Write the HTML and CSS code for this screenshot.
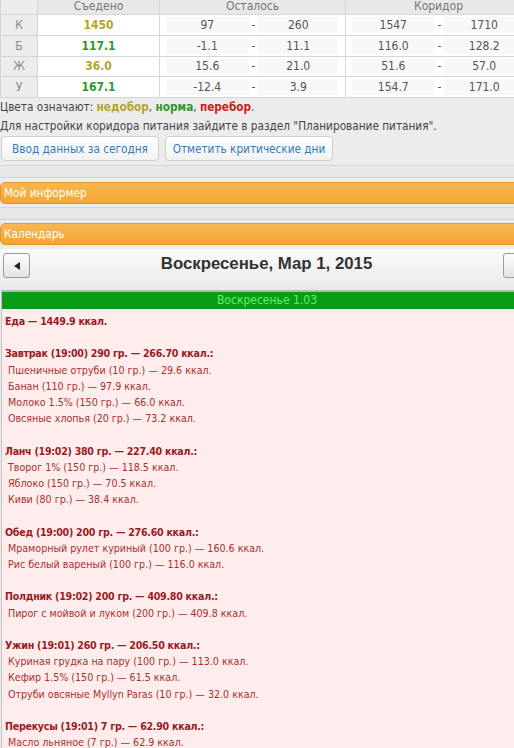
FILE: index.html
```html
<!DOCTYPE html>
<html lang="ru">
<head>
<meta charset="utf-8">
<title>Дневник питания</title>
<link rel="stylesheet" href="styles.css">
</head>
<body>
<div class="page">
  <div class="stats">
    <div class="row head">
      <div class="c lbl"></div><div class="c">Съедено</div><div class="c">Осталось</div><div class="c">Коридор</div>
    </div>
    <div class="row">
      <div class="c lbl">К</div><div class="c eaten under">1450</div>
      <div class="c range"><span class="v">97</span><span class="dash">-</span><span class="v">260</span></div>
      <div class="c range"><span class="v">1547</span><span class="dash">-</span><span class="v">1710</span></div>
    </div>
    <div class="row">
      <div class="c lbl">Б</div><div class="c eaten ok">117.1</div>
      <div class="c range"><span class="v">-1.1</span><span class="dash">-</span><span class="v">11.1</span></div>
      <div class="c range"><span class="v">116.0</span><span class="dash">-</span><span class="v">128.2</span></div>
    </div>
    <div class="row">
      <div class="c lbl">Ж</div><div class="c eaten under">36.0</div>
      <div class="c range"><span class="v">15.6</span><span class="dash">-</span><span class="v">21.0</span></div>
      <div class="c range"><span class="v">51.6</span><span class="dash">-</span><span class="v">57.0</span></div>
    </div>
    <div class="row">
      <div class="c lbl">У</div><div class="c eaten ok">167.1</div>
      <div class="c range"><span class="v">-12.4</span><span class="dash">-</span><span class="v">3.9</span></div>
      <div class="c range"><span class="v">154.7</span><span class="dash">-</span><span class="v">171.0</span></div>
    </div>
  </div>

  <p class="note">Цвета означают: <b class="under">недобор</b>, <b class="ok">норма</b>, <b class="over">перебор</b>.</p>
  <p class="note">Для настройки коридора питания зайдите в раздел "Планирование питания".</p>

  <div class="actions">
    <button class="btn btn-today">Ввод данных за сегодня</button>
    <button class="btn btn-crit">Отметить критические дни</button>
  </div>

  <div class="panel-body"></div>
  <div class="bar">Мой информер</div>
  <div class="panel-body"></div>
  <div class="bar bar-last">Календарь</div>

  <div class="cal-head">
    <button class="nav" aria-label="Назад"><svg width="6" height="8" viewBox="0 0 6 8"><polygon points="6,0 6,8 0,4" fill="#222"/></svg></button>
    <h2 class="cal-title">Воскресенье, Мар 1, 2015</h2>
    <button class="nav" aria-label="Вперёд"><svg width="6" height="8" viewBox="0 0 6 8"><polygon points="0,0 0,8 6,4" fill="#c98b3f"/></svg></button>
  </div>

  <div class="day">
    <div class="day-title">Воскресенье 1.03</div>
    <div class="day-body">
      <p class="total">Еда — 1449.9 ккал.</p>
      <div class="meal">
        <p class="meal-h">Завтрак (19:00) 290 гр. — 266.70 ккал.:</p>
        <p class="item">Пшеничные отруби (10 гр.) — 29.6 ккал.</p>
        <p class="item">Банан (110 гр.) — 97.9 ккал.</p>
        <p class="item">Молоко 1.5% (150 гр.) — 66.0 ккал.</p>
        <p class="item">Овсяные хлопья (20 гр.) — 73.2 ккал.</p>
      </div>
      <div class="meal">
        <p class="meal-h">Ланч (19:02) 380 гр. — 227.40 ккал.:</p>
        <p class="item">Творог 1% (150 гр.) — 118.5 ккал.</p>
        <p class="item">Яблоко (150 гр.) — 70.5 ккал.</p>
        <p class="item">Киви (80 гр.) — 38.4 ккал.</p>
      </div>
      <div class="meal">
        <p class="meal-h">Обед (19:00) 200 гр. — 276.60 ккал.:</p>
        <p class="item">Мраморный рулет куриный (100 гр.) — 160.6 ккал.</p>
        <p class="item">Рис белый вареный (100 гр.) — 116.0 ккал.</p>
      </div>
      <div class="meal">
        <p class="meal-h">Полдник (19:02) 200 гр. — 409.80 ккал.:</p>
        <p class="item">Пирог с мойвой и луком (200 гр.) — 409.8 ккал.</p>
      </div>
      <div class="meal">
        <p class="meal-h">Ужин (19:01) 260 гр. — 206.50 ккал.:</p>
        <p class="item">Куриная грудка на пару (100 гр.) — 113.0 ккал.</p>
        <p class="item">Кефир 1.5% (150 гр.) — 61.5 ккал.</p>
        <p class="item">Отруби овсяные Myllyn Paras (10 гр.) — 32.0 ккал.</p>
      </div>
      <div class="meal">
        <p class="meal-h">Перекусы (19:01) 7 гр. — 62.90 ккал.:</p>
        <p class="item">Масло льняное (7 гр.) — 62.9 ккал.</p>
      </div>
    </div>
  </div>
</div>
</body>
</html>
```
FILE: styles.css
```css
html, body {
  margin: 0;
  padding: 0;
}
body {
  background: #ececec;
  font-family: "DejaVu Sans Condensed", "DejaVu Sans", sans-serif;
  overflow: hidden;
  height: 748px;
}
.page {
  width: 532px;
}

/* stats table */
.stats {
  margin-top: -3px;
  font-size: 12px;
  color: #555;
}
.row {
  display: grid;
  grid-template-columns: 38px 122px 186px 186px;
  height: 20.75px;
}
.row.head {
  height: 18px;
}
.c {
  box-sizing: border-box;
  border-right: 1px solid #d6d6d6;
  border-bottom: 1px solid #d6d6d6;
  background: #fff;
  display: flex;
  align-items: center;
  justify-content: center;
}
.head .c {
  background: #e8e8e8;
  color: #777;
}
.row .lbl {
  background: #ececec;
  color: #888;
  border-left: 1px solid #d6d6d6;
}
.eaten {
  font-weight: bold;
}
.range {
  justify-content: flex-start;
  padding: 2px 7px 2px 6px;
}
.range .v {
  width: 83px;
  height: 100%;
  background: #f8f8f8;
  display: flex;
  align-items: center;
  justify-content: center;
}
.range .v:last-child {
  width: 80px;
}
.range .dash {
  width: 10px;
  text-align: center;
}
.under { color: #b3a52c; }
.ok { color: #2e962e; }
.over { color: #cc2020; }

/* notes */
.note {
  margin: 0;
  font-size: 11.7px;
  line-height: 19px;
  color: #444;
}

.actions {
  display: flex;
  gap: 6px;
  padding-left: 1px;
  margin-bottom: 4px;
}
.btn {
  height: 25px;
  border: 1px solid #cfcfcf;
  border-radius: 4px;
  background: linear-gradient(#ffffff, #f2f2f2);
  color: #2f7cc0;
  font-family: inherit;
  font-size: 11.7px;
  padding: 0;
}
.btn-today { width: 158px; }
.btn-crit { width: 168px; }

/* collapsed panels */
.panel-body {
  height: 11px;
  border-top: 1px solid #d6d6d6;
  border-bottom: 1px solid #d6d6d6;
  background: #e8e8e8;
  margin-bottom: 4px;
}
.bar + .panel-body {
  margin-bottom: 3px;
}
.bar {
  box-sizing: border-box;
  height: 22px;
  border: 1px solid #e1952c;
  border-radius: 5px;
  background: linear-gradient(#f7b752, #f3a632);
  color: #fff;
  font-size: 11.7px;
  line-height: 20px;
  padding-left: 3px;
  margin-bottom: 3px;
}
.bar-last {
  margin-bottom: 4px;
}

/* calendar */
.cal-head {
  height: 41px;
  box-sizing: border-box;
  padding: 4px 2px 0 3px;
  display: flex;
  align-items: flex-start;
  background: linear-gradient(#fbfbfb, #e9e9e9);
}
.nav {
  width: 27px;
  height: 25px;
  border: 1px solid #9a9a9a;
  border-radius: 3px;
  background: linear-gradient(#fdfdfd, #e3e3e3);
  padding: 0;
  display: flex;
  align-items: center;
  justify-content: center;
}
.cal-title {
  flex: 1;
  margin: 0;
  text-align: center;
  font-family: "Liberation Sans", Arial, sans-serif;
  font-size: 16.8px;
  font-weight: bold;
  color: #333;
  line-height: 22px;
}

.day {
  margin-left: 1px;
  border-left: 1px solid #c2c2c2;
}
.day-title {
  border-top: 2px solid #b8b8b8;
  height: 17px;
  background: #0a9c16;
  color: #62ef62;
  text-align: center;
  font-size: 12px;
  line-height: 17px;
}
.day-body {
  background: #ffeded;
  padding: 4px 3px 20px;
  font-size: 10.6px;
  line-height: 16.2px;
  color: #a8302f;
}
.day-body p {
  margin: 0;
}
.total, .meal-h {
  font-weight: bold;
  color: #9a1b1e;
  letter-spacing: -0.27px;
}
.meal {
  margin-top: 16.2px;
}
.item {
  padding-left: 3px;
}
```
